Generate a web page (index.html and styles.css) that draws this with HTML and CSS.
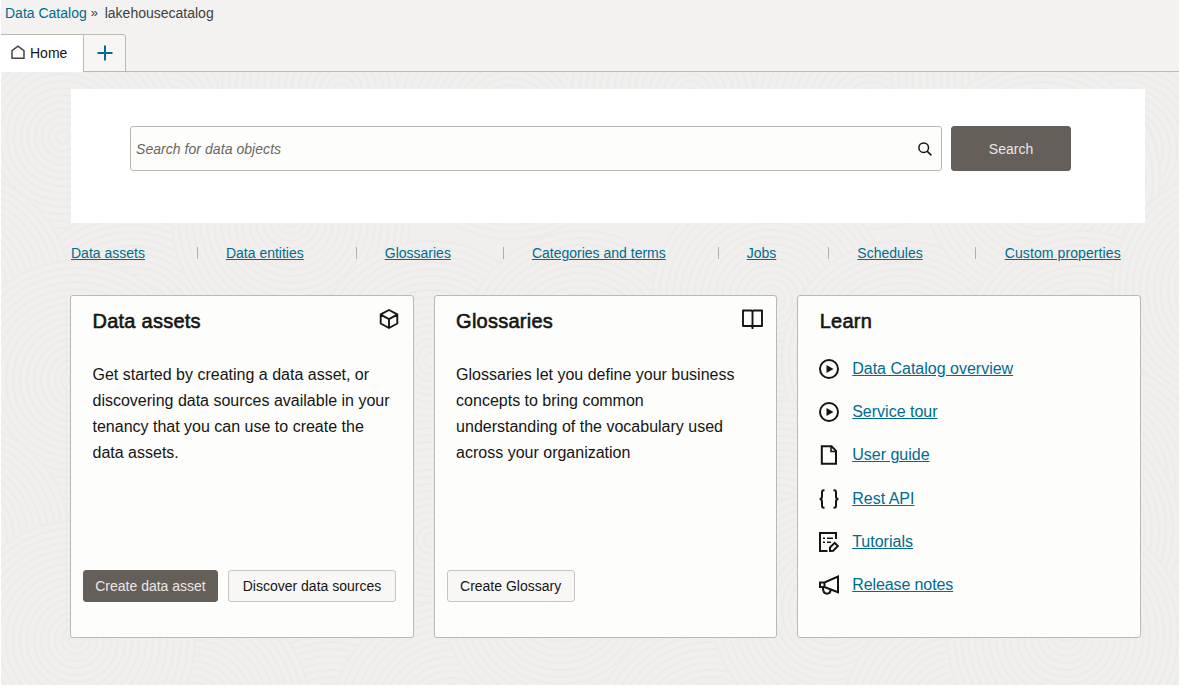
FILE: index.html
```html
<!DOCTYPE html>
<html lang="en">
<head>
<meta charset="utf-8">
<title>Data Catalog</title>
<link rel="stylesheet" href="styles.css">
</head>
<body>
<div class="app">
  <header class="top">
    <nav class="crumbs"><a href="#">Data Catalog</a><span class="crumb-sep">»</span><span>lakehousecatalog</span></nav>
    <div class="tabs">
      <div class="tab tab-home">
        <svg width="14" height="15" viewBox="0 0 14 15" fill="none" stroke="#444" stroke-width="1.5"><path d="M1 13.3V5.700L7 1.200l6 4.500v7.600z"/></svg>
        <span>Home</span>
      </div>
      <div class="tab tab-add">
        <svg width="16" height="16" viewBox="0 0 16 16" stroke="#006b8f" stroke-width="2"><path d="M8 .5v15M.5 8h15"/></svg>
      </div>
    </div>
  </header>
  <main class="main">
    <svg class="texture" viewBox="0 72 1178 613" preserveAspectRatio="xMinYMin slice">
      <defs>
        <g id="rings" fill="#f0efed" stroke="#ecebe9" stroke-width="2">
          <circle r="119"/><circle r="112"/><circle r="105"/><circle r="98"/><circle r="91"/><circle r="84"/><circle r="77"/><circle r="70"/><circle r="63"/><circle r="56"/><circle r="49"/><circle r="42"/><circle r="35"/><circle r="28"/><circle r="21"/><circle r="14"/><circle r="7"/>
        </g>
      </defs>
      <use href="#rings" x="170" y="100"/><use href="#rings" x="340" y="90"/><use href="#rings" x="510" y="120"/><use href="#rings" x="690" y="95"/><use href="#rings" x="870" y="110"/><use href="#rings" x="1010" y="80"/>
      <use href="#rings" x="-30" y="60"/><use href="#rings" x="1120" y="60"/><use href="#rings" x="1120" y="150"/><use href="#rings" x="62" y="137"/>
      <use href="#rings" x="130" y="330"/><use href="#rings" x="290" y="220"/><use href="#rings" x="430" y="360"/><use href="#rings" x="580" y="350"/><use href="#rings" x="770" y="300"/><use href="#rings" x="900" y="360"/><use href="#rings" x="1040" y="180"/>
      <use href="#rings" x="1080" y="350"/><use href="#rings" x="1230" y="290"/><use href="#rings" x="-50" y="290"/><use href="#rings" x="75" y="380"/><use href="#rings" x="1090" y="480"/>
      <use href="#rings" x="-50" y="540"/><use href="#rings" x="1230" y="690"/><use href="#rings" x="1060" y="530"/><use href="#rings" x="430" y="540"/><use href="#rings" x="780" y="520"/>
      <use href="#rings" x="330" y="740"/><use href="#rings" x="190" y="710"/><use href="#rings" x="75" y="640"/><use href="#rings" x="450" y="720"/><use href="#rings" x="560" y="600"/><use href="#rings" x="710" y="740"/><use href="#rings" x="830" y="610"/><use href="#rings" x="960" y="720"/><use href="#rings" x="1065" y="635"/>
    </svg>
    <div class="content">
      <section class="search-panel">
        <div class="search-box">
          <span>Search for data objects</span>
          <svg width="14" height="14" viewBox="0 0 14 14" fill="none" stroke="#161513" stroke-width="1.5"><circle cx="5.7" cy="5.7" r="4.800"/><path d="M9.100 9.100 13.400 13.400"/></svg>
        </div>
        <button class="btn btn-dark btn-search">Search</button>
      </section>
      <nav class="links">
        <a href="#">Data assets</a><i></i><a href="#">Data entities</a><i></i><a href="#">Glossaries</a><i></i><a href="#">Categories and terms</a><i></i><a href="#">Jobs</a><i></i><a href="#">Schedules</a><i></i><a class="wide" href="#">Custom properties</a>
      </nav>
      <div class="cards">
        <section class="card">
          <div class="card-head">
            <h2>Data assets</h2>
            <svg width="20" height="20" viewBox="0 0 20 20" fill="none" stroke="#161513" stroke-width="1.9" stroke-linejoin="round"><path d="M10 1 18.300 5.300V14.500L10 19 1.700 14.500V5.300zM1.700 5.600 10 10.200l8.300-4.600M10 10.200V19"/></svg>
          </div>
          <p>Get started by creating a data asset, or<br>discovering data sources available in your<br>tenancy that you can use to create the<br>data assets.</p>
          <div class="actions"><button class="btn btn-dark btn-create">Create data asset</button><button class="btn btn-discover">Discover data sources</button></div>
        </section>
        <section class="card">
          <div class="card-head">
            <h2>Glossaries</h2>
            <svg class="book" width="21" height="20" viewBox="0 0 21 20" fill="none" stroke="#161513" stroke-width="1.9" stroke-linejoin="round"><path d="M10.500 2.500 9.500 1.500H1V17H9.500l1 1 1-1H20V1.500H11.500zV20"/></svg>
          </div>
          <p>Glossaries let you define your business<br>concepts to bring common<br>understanding of the vocabulary used<br>across your organization</p>
          <div class="actions"><button class="btn btn-glossary">Create Glossary</button></div>
        </section>
        <section class="card">
          <div class="card-head"><h2>Learn</h2></div>
          <ul class="learn">
            <li><svg viewBox="0 0 20 20"><circle cx="10" cy="10" r="9"/><path class="solid" d="M7.500 6v8l7-4z"/></svg><a href="#">Data Catalog overview</a></li>
            <li><svg viewBox="0 0 20 20"><circle cx="10" cy="10" r="9"/><path class="solid" d="M7.500 6v8l7-4z"/></svg><a href="#">Service tour</a></li>
            <li><svg viewBox="0 0 20 20"><path d="M2.800 1.200h9.700L17 5.800v13H2.800z"/><path d="M12 1.500v5h5" stroke-width="1.600"/></svg><a href="#">User guide</a></li>
            <li><svg viewBox="0 0 20 20"><path d="M5.500 1.300H4.800Q3 1.300 3 3.200V7.400Q3 10 .6 10 3 10 3 12.600v4.200q0 1.900 1.800 1.900h.7M14.500 1.300h.7q1.800 0 1.800 1.900v4.200Q17 10 19.400 10 17 10 17 12.600v4.200q0 1.900-1.800 1.900h-.7"/></svg><a href="#">Rest API</a></li>
            <li><svg viewBox="0 0 20 20"><path d="M17 7V1H1v18h7.500"/><path d="M4 6.200h2M8 6.200h6M4 10.200h2M8 10.200h4" stroke-width="1.600"/><path d="M11 15.500l4.700-4.700 3.200 3.200-4.700 4.700L11 19z"/></svg><a href="#">Tutorials</a></li>
            <li><svg viewBox="0 0 20 20"><path d="M1 7.500h4.500L19 1.600v15.700L5.500 12H1zM5.500 7.500V12"/><path d="M4 12.200q-.4 6 4 6.500 3.300 0 3.700-4"/></svg><a class="tight" href="#">Release notes</a></li>
          </ul>
        </section>
      </div>
    </div>
  </main>
</div>
</body>
</html>
```
FILE: styles.css
```css
* { box-sizing: border-box; }
body {
  margin: 0;
  background: #fff;
  color: #161513;
  font: 14px/20px "Liberation Sans", Arial, sans-serif;
}
a { color: #006b8f; text-underline-offset: 1px; }
svg { display: block; flex: none; }
.app {
  width: 1180px;
  height: 686px;
  padding: 0 1px 1px;
  overflow: hidden;
}
.top {
  height: 72px;
  display: flex;
  flex-direction: column;
  justify-content: space-between;
  background: #f3f2f1;
  border-bottom: 1px solid #bcb8b2;
}
.crumbs { display: flex; padding: 3px 4px 0; color: #403e3b; }
.crumbs a { text-decoration: none; }
.crumb-sep { width: 18px; padding-left: 4px; font-size: 13px; }
.tabs { display: flex; height: 38px; margin-bottom: -1px; }
.tab { display: flex; align-items: center; border: 1px solid #bcb8b2; }
.tab-home {
  width: 83px;
  gap: 5px;
  padding: 0 0 2px 10px;
  border-left: 0;
  border-bottom: 0;
  background: #fff;
}
.tab-add {
  width: 43px;
  margin-left: -1px;
  justify-content: center;
  background: #f7f6f4;
  border-radius: 0 3px 0 0;
}
.main { position: relative; height: 613px; background: #f0efed; }
.texture { position: absolute; inset: 0; width: 1178px; height: 613px; }
.content { position: relative; padding: 17px 0 0 69px; }
.search-panel {
  display: flex;
  gap: 9px;
  width: 1074px;
  height: 134px;
  margin-left: 1px;
  padding: 37px 0 0 59px;
  background: #fff;
}
.search-box {
  display: flex;
  align-items: center;
  justify-content: space-between;
  width: 812px;
  height: 45px;
  padding: 0 9px 0 5px;
  border: 1px solid #bcb6b1;
  border-radius: 3px;
  background: #fdfdfc;
  color: #6b6661;
  font-style: italic;
  letter-spacing: .05px;
}
.btn {
  padding: 0;
  border: 1px solid #c9c4bf;
  border-radius: 3px;
  background: #f8f7f5;
  color: #161513;
  font: inherit;
  white-space: nowrap;
  height: 32px;
}
.btn-dark { background: #655f5a; border-color: #655f5a; color: #e9e7e5; }
.btn-search { width: 120px; height: 45px; }
.btn-create { width: 135px; }
.btn-discover { width: 168px; }
.btn-glossary { width: 128px; }
.links { display: flex; align-items: center; height: 72px; padding: 0 0 12px 1px; }
.links i { width: 1px; height: 12px; margin: 0 28px 0 52px; background: #b5afaa; }
.links .wide { margin-left: 1px; letter-spacing: .1px; }
.cards { display: flex; gap: 20px; }
.card {
  display: flex;
  flex-direction: column;
  width: 343.6px;
  height: 343px;
  padding: 12px 12px 35px;
  border: 1px solid #bcb8b4;
  border-radius: 3px;
  background: #fdfdfc;
}
.card-head { display: flex; justify-content: space-between; padding: 0 2px 0 9.500px; }
.card-head svg { margin-top: 1px; }
.card-head .book { margin-right: -1px; }
.card h2 {
  margin: 0;
  font-size: 20px;
  line-height: 26px;
  font-weight: 400;
  letter-spacing: .25px;
  -webkit-text-stroke: .6px #161513;
}
.card p { margin: 28px 0 0 9.500px; font-size: 16px; line-height: 26px; white-space: nowrap; }
.actions { display: flex; gap: 10px; margin-top: auto; }
.learn { list-style: none; margin: 13px 0 0; padding: 0 0 0 9px; font-size: 16px; }
.learn li { display: flex; align-items: center; gap: 13px; height: 43.300px; }
.learn svg { width: 20px; height: 20px; fill: none; stroke: #161513; stroke-width: 2; }
.learn .solid { fill: #161513; stroke: none; }
.learn .tight { letter-spacing: -.1px; }
```
